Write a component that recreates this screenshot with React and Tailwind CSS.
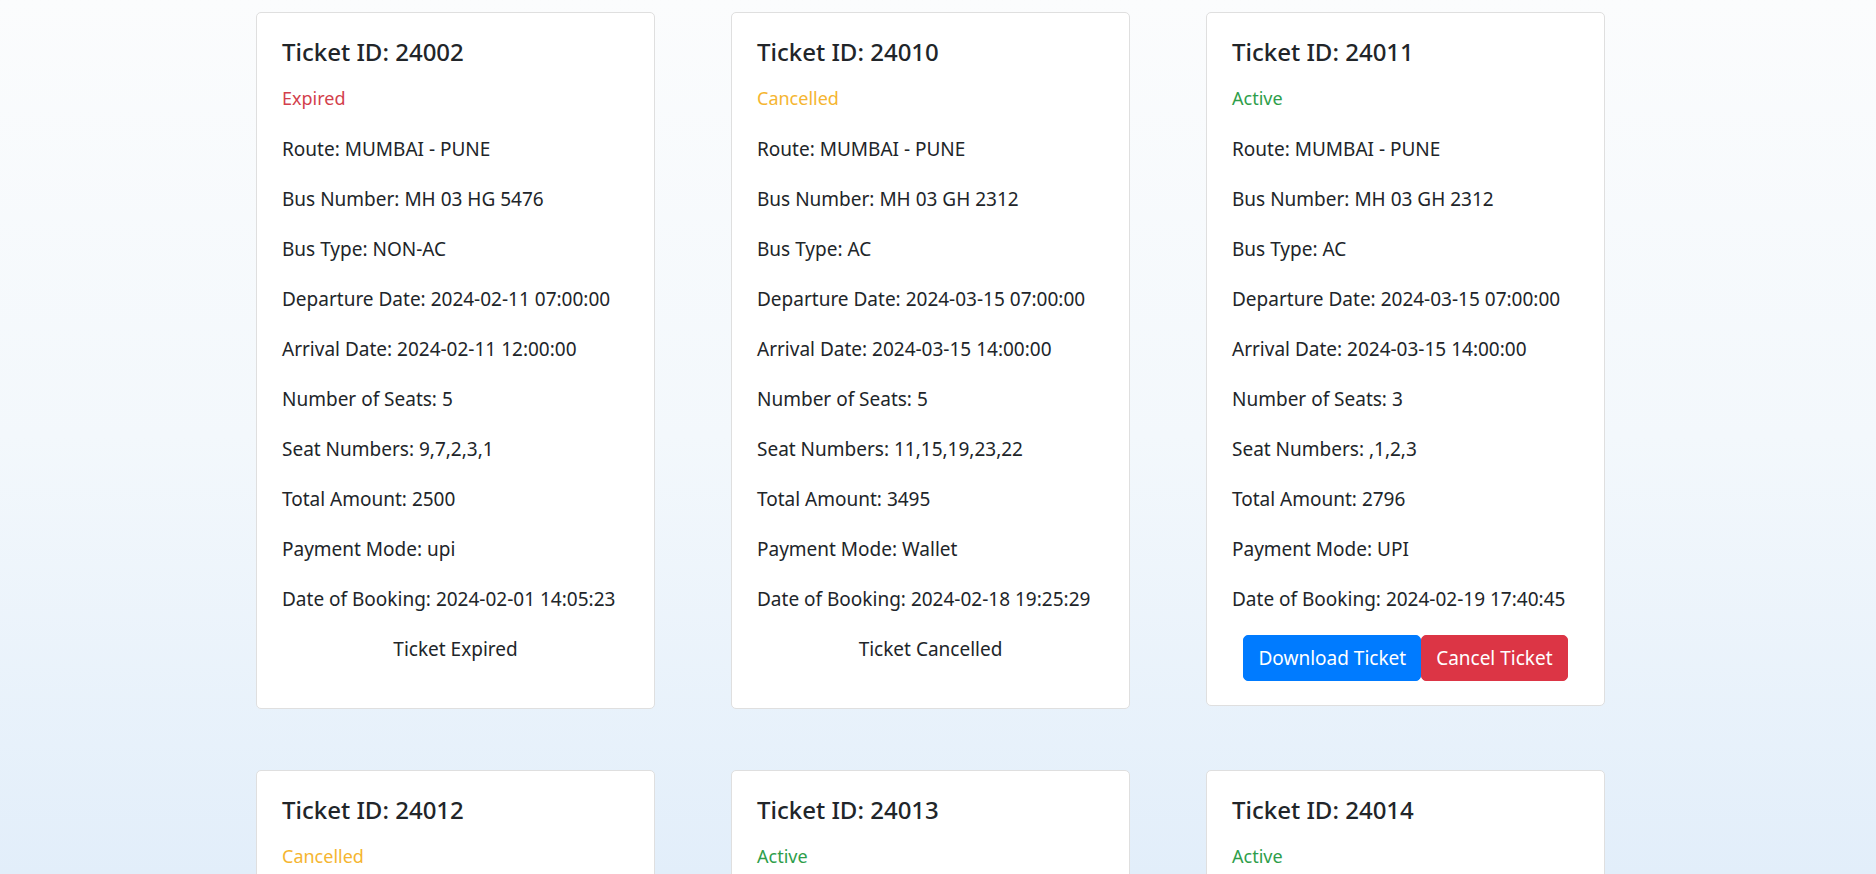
import React from "react";

const tickets = [
  {
    id: "24002",
    status: "Expired",
    route: "MUMBAI - PUNE",
    bus: "MH 03 HG 5476",
    type: "NON-AC",
    dep: "2024-02-11 07:00:00",
    arr: "2024-02-11 12:00:00",
    seats: "5",
    seatNos: "9,7,2,3,1",
    amount: "2500",
    mode: "upi",
    booked: "2024-02-01 14:05:23",
  },
  {
    id: "24010",
    status: "Cancelled",
    route: "MUMBAI - PUNE",
    bus: "MH 03 GH 2312",
    type: "AC",
    dep: "2024-03-15 07:00:00",
    arr: "2024-03-15 14:00:00",
    seats: "5",
    seatNos: "11,15,19,23,22",
    amount: "3495",
    mode: "Wallet",
    booked: "2024-02-18 19:25:29",
  },
  {
    id: "24011",
    status: "Active",
    route: "MUMBAI - PUNE",
    bus: "MH 03 GH 2312",
    type: "AC",
    dep: "2024-03-15 07:00:00",
    arr: "2024-03-15 14:00:00",
    seats: "3",
    seatNos: ",1,2,3",
    amount: "2796",
    mode: "UPI",
    booked: "2024-02-19 17:40:45",
  },
  {
    id: "24012",
    status: "Cancelled",
    route: "MUMBAI - PUNE",
    bus: "MH 03 GH 2312",
    type: "AC",
    dep: "2024-03-15 07:00:00",
    arr: "2024-03-15 14:00:00",
    seats: "2",
    seatNos: "4,5",
    amount: "1398",
    mode: "UPI",
    booked: "2024-02-19 18:02:11",
  },
  {
    id: "24013",
    status: "Active",
    route: "MUMBAI - PUNE",
    bus: "MH 03 GH 2312",
    type: "AC",
    dep: "2024-03-15 07:00:00",
    arr: "2024-03-15 14:00:00",
    seats: "2",
    seatNos: "6,7",
    amount: "1398",
    mode: "Wallet",
    booked: "2024-02-19 18:10:37",
  },
  {
    id: "24014",
    status: "Active",
    route: "MUMBAI - PUNE",
    bus: "MH 03 GH 2312",
    type: "AC",
    dep: "2024-03-15 07:00:00",
    arr: "2024-03-15 14:00:00",
    seats: "1",
    seatNos: "8",
    amount: "699",
    mode: "UPI",
    booked: "2024-02-19 18:25:50",
  },
];

function Status({ s }) {
  if (s === "Expired")
    return <p className="text-[18px] leading-[29px] mb-[22px] text-[#d33f4c]">Expired</p>;
  if (s === "Cancelled")
    return <p className="text-[18px] leading-[29px] mb-[22px] text-[#f5b530]">Cancelled</p>;
  return <p className="text-[18px] leading-[29px] mb-[22px] text-[#2e9e4a]">Active</p>;
}

function Line({ children }) {
  return <p className="text-[19px] leading-[29px] mb-[21px]">{children}</p>;
}

function Card({ t }) {
  return (
    <div className="bg-white border border-[#dfdfdf] rounded-[5px] px-[25px] pt-[24px] pb-[24px] text-[#212529]">
      <h5 className="text-[24px] leading-[29px] font-medium mb-[18px] text-[#212529]">
        Ticket ID: {t.id}
      </h5>
      <Status s={t.status} />
      <Line>Route: {t.route}</Line>
      <Line>Bus Number: {t.bus}</Line>
      <Line>Bus Type: {t.type}</Line>
      <Line>Departure Date: {t.dep}</Line>
      <Line>Arrival Date: {t.arr}</Line>
      <Line>Number of Seats: {t.seats}</Line>
      <Line>Seat Numbers: {t.seatNos}</Line>
      <Line>Total Amount: {t.amount}</Line>
      <Line>Payment Mode: {t.mode}</Line>
      <Line>Date of Booking: {t.booked}</Line>
      {t.status === "Active" ? (
        <div className="flex justify-center">
          <button className="h-[46px] px-[14px] bg-[#007bff] text-white text-[19px] leading-[29px] rounded-[5px] border border-[#007bff]">
            Download Ticket
          </button>
          <button className="h-[46px] px-[14px] bg-[#dc3545] text-white text-[19px] leading-[29px] rounded-[5px] border border-[#dc3545]">
            Cancel Ticket
          </button>
        </div>
      ) : (
        <p className="text-[19px] leading-[29px] mb-[20px] text-center">
          Ticket {t.status}
        </p>
      )}
    </div>
  );
}

export default function App() {
  return (
    <div className="h-[874px] overflow-hidden bg-linear-to-b from-[#fbfcfd] via-[#f3f8fc] to-[#e2eefa] font-['Noto_Sans',sans-serif]">
      <div className="grid grid-cols-[399px_399px_399px] gap-x-[76px] gap-y-[61px] pl-[256px] pt-[12px] items-start">
        {tickets.map((t) => (
          <Card key={t.id} t={t} />
        ))}
      </div>
    </div>
  );
}
